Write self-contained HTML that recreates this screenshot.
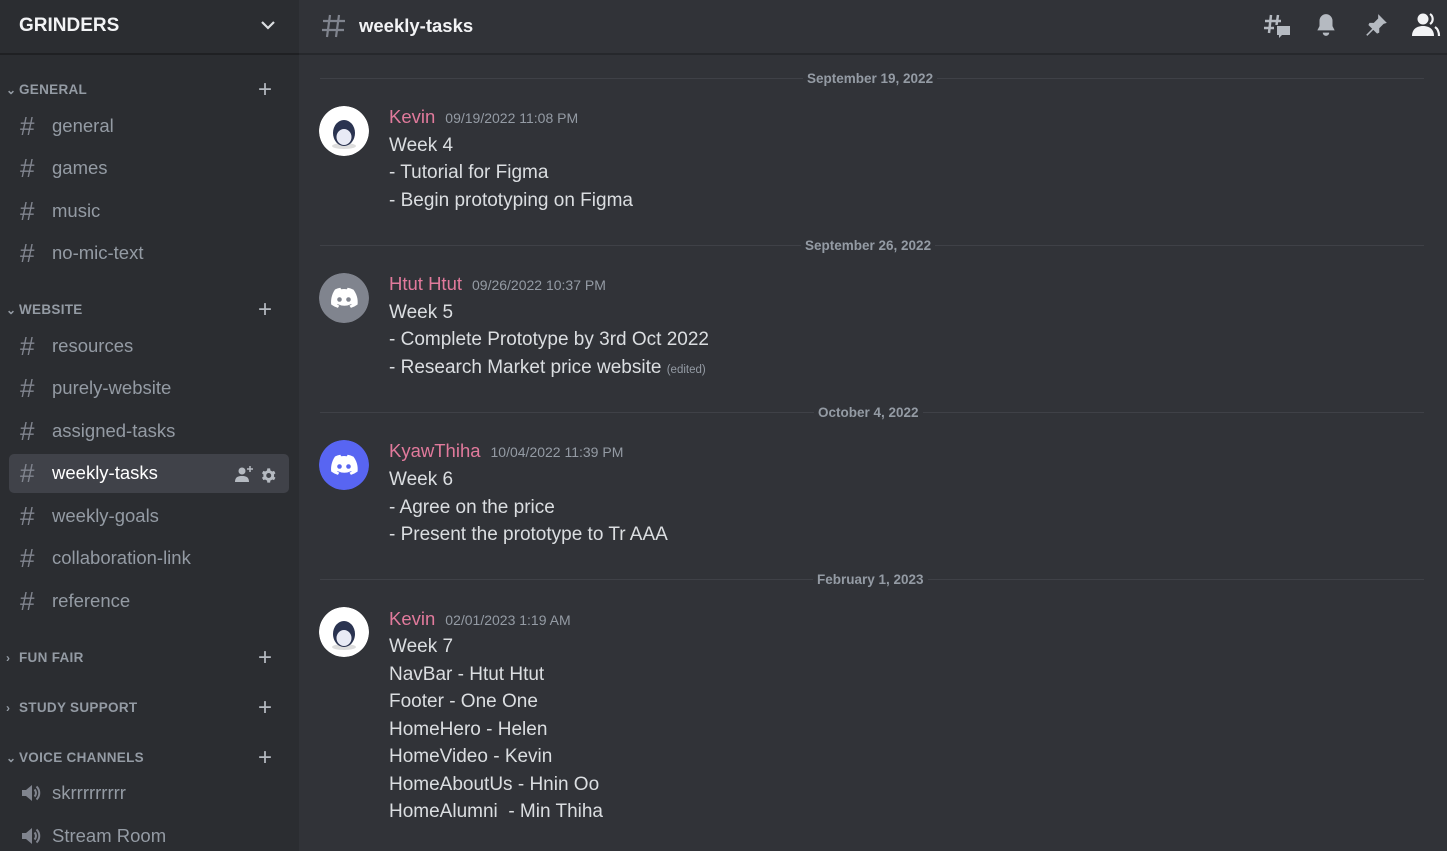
<!DOCTYPE html>
<html><head><meta charset="utf-8"><style>
*{margin:0;padding:0;box-sizing:border-box}
body{width:1447px;height:851px;overflow:hidden;background:#313338;font-family:"Liberation Sans",sans-serif;position:relative}
.a{position:absolute;white-space:nowrap}
#side{position:absolute;left:0;top:0;width:299px;height:851px;background:#2b2d31}
#sh{position:absolute;left:0;top:0;width:299px;height:55px;border-bottom:2px solid #1f2023;background:#2b2d31}
#mh{position:absolute;left:299px;top:0;width:1148px;height:55px;border-bottom:2px solid #26282c}
.ch{position:absolute;left:20px;height:30px;line-height:30px;font-size:18.5px;color:#949ba4}
.ch .h{display:inline-block;width:32px;font-size:26px;color:#80848e;vertical-align:top}
.cat{position:absolute;left:6px;font-size:13.5px;font-weight:bold;color:#949ba4;letter-spacing:.3px;line-height:16px}
.cat i{font-style:normal;font-size:12px;display:inline-block;width:13px}
.plus{position:absolute;left:258px;font-size:24px;color:#b5bac1;line-height:20px}
.sep{position:absolute;left:320px;width:1104px;height:1px;background:#3f4147}
.dt{position:absolute;font-size:13.5px;font-weight:bold;color:#949ba4;background:#313338;padding:0 4px;line-height:16px}
.av{position:absolute;left:319px;width:50px;height:50px;border-radius:50%}
.nm{position:absolute;left:389px;font-size:18.5px;color:#e17a9c;line-height:22px}
.nm span{font-size:14px;color:#949ba4;margin-left:10px}
.ln{position:absolute;left:389px;font-size:19px;color:#dbdee1;line-height:24px;white-space:nowrap;margin-top:2px}
</style></head><body>
<div id="side">
<div id="sh"><div class="a" style="left:19px;top:15px;font-size:19px;font-weight:bold;color:#f2f3f5">GRINDERS</div>
<svg class="a" style="left:259px;top:16px" width="18" height="18" viewBox="0 0 18 18"><path d="M3 6l6 6 6-6" stroke="#dbdee1" stroke-width="2.2" fill="none"/></svg></div>

<div class="cat" style="top:82px"><i>⌄</i>GENERAL</div><div class="plus" style="top:80px">+</div>
<div class="ch" style="top:111px"><span class="h">#</span>general</div>
<div class="ch" style="top:153px"><span class="h">#</span>games</div>
<div class="ch" style="top:196px"><span class="h">#</span>music</div>
<div class="ch" style="top:238px"><span class="h">#</span>no-mic-text</div>

<div class="cat" style="top:302px"><i>⌄</i>WEBSITE</div><div class="plus" style="top:300px">+</div>
<div class="ch" style="top:331px"><span class="h">#</span>resources</div>
<div class="ch" style="top:373px"><span class="h">#</span>purely-website</div>
<div class="ch" style="top:416px"><span class="h">#</span>assigned-tasks</div>
<div class="a" style="left:9px;top:454px;width:280px;height:39px;background:#404249;border-radius:5px"></div>
<div class="ch" style="top:458px;color:#fff"><span class="h">#</span>weekly-tasks</div>
<svg class="a" style="left:234px;top:465px" width="20" height="18" viewBox="0 0 20 18"><circle cx="8" cy="6" r="3.5" fill="#b5bac1"/><path d="M1 17c0-5 3-6 7-6s7 1 7 6z" fill="#b5bac1"/><path d="M16 1v6M13 4h6" stroke="#b5bac1" stroke-width="1.5"/></svg>
<svg class="a" style="left:260px;top:467px" width="17" height="17" viewBox="0 0 24 24"><path fill="#b5bac1" d="M19.7 13.5a7.8 7.8 0 000-3l2.1-1.6-2-3.5-2.5 1a8 8 0 00-2.6-1.5L14.3 2h-4l-.4 2.9a8 8 0 00-2.6 1.5l-2.5-1-2 3.5 2.1 1.6a7.8 7.8 0 000 3l-2.1 1.6 2 3.5 2.5-1a8 8 0 002.6 1.5l.4 2.9h4l.4-2.9a8 8 0 002.6-1.5l2.5 1 2-3.5zM12.3 15.5a3.5 3.5 0 110-7 3.5 3.5 0 010 7z"/></svg>
<div class="ch" style="top:501px"><span class="h">#</span>weekly-goals</div>
<div class="ch" style="top:543px"><span class="h">#</span>collaboration-link</div>
<div class="ch" style="top:586px"><span class="h">#</span>reference</div>

<div class="cat" style="top:650px"><i>›</i>FUN FAIR</div><div class="plus" style="top:648px">+</div>
<div class="cat" style="top:700px"><i>›</i>STUDY SUPPORT</div><div class="plus" style="top:698px">+</div>
<div class="cat" style="top:750px"><i>⌄</i>VOICE CHANNELS</div><div class="plus" style="top:748px">+</div>
<svg class="a" style="left:20px;top:782px" width="22" height="22" viewBox="0 0 22 22"><path d="M2 8h4l6-5v16l-6-5H2z" fill="#80848e"/><path d="M14.5 7.5a5 5 0 010 7M16.5 4.5a9 9 0 010 13" stroke="#80848e" stroke-width="2" fill="none"/></svg>
<div class="ch" style="top:778px;left:52px">skrrrrrrrrr</div>
<svg class="a" style="left:20px;top:825px" width="22" height="22" viewBox="0 0 22 22"><path d="M2 8h4l6-5v16l-6-5H2z" fill="#80848e"/><path d="M14.5 7.5a5 5 0 010 7M16.5 4.5a9 9 0 010 13" stroke="#80848e" stroke-width="2" fill="none"/></svg>
<div class="ch" style="top:821px;left:52px">Stream Room</div>
</div>

<div id="mh">
<svg class="a" style="left:22px;top:13px" width="26" height="26" viewBox="0 0 26 26"><path d="M9 2L6 24M18 2l-3 22M2 8h22M1 17h22" stroke="#80848e" stroke-width="2.2" fill="none"/></svg>
<div class="a" style="left:60px;top:15px;font-size:18.5px;font-weight:bold;color:#f2f3f5">weekly-tasks</div>
<svg class="a" style="left:964px;top:12px" width="28" height="28" viewBox="0 0 28 28"><path d="M8 3l-2 18M15 3l-1.5 10M2 9h16M1 16h10" stroke="#b5bac1" stroke-width="2.5" fill="none"/><path d="M14 14h13v9h-8l-3 3v-3h-2z" fill="#b5bac1"/></svg>
<svg class="a" style="left:1014px;top:12px" width="26" height="26" viewBox="0 0 24 24"><path fill="#b5bac1" d="M12 2a6 6 0 00-6 6v5l-2 4h16l-2-4V8a6 6 0 00-6-6zM9 19a3 3 0 006 0z"/></svg>
<svg class="a" style="left:1064px;top:12px" width="26" height="26" viewBox="0 0 24 24"><path fill="#b5bac1" d="M14 2l8 8-3 1-4 4 0 4-2 1-3.5-3.5L4 22l-1-1 5.5-5.5L5 12l1-2h4l4-4z"/></svg>
<svg class="a" style="left:1112px;top:11px" width="30" height="28" viewBox="0 0 30 28"><circle cx="12" cy="8" r="5.5" fill="#f2f3f5"/><path d="M1 25c0-7 5-10 11-10s11 3 11 10z" fill="#f2f3f5"/><path d="M19 3a6 6 0 010 10M24 16c3 2 4 5 4 9" stroke="#f2f3f5" stroke-width="2.2" fill="none"/></svg>
</div>

<div class="sep" style="top:78px"></div><div class="dt" style="left:803px;top:71px">September 19, 2022</div>
<div class="sep" style="top:245px"></div><div class="dt" style="left:801px;top:238px">September 26, 2022</div>
<div class="sep" style="top:412px"></div><div class="dt" style="left:814px;top:405px">October 4, 2022</div>
<div class="sep" style="top:579px"></div><div class="dt" style="left:813px;top:572px">February 1, 2023</div>

<svg class="av" style="top:106px" viewBox="0 0 50 50"><circle cx="25" cy="25" r="25" fill="#fff"/><ellipse cx="25" cy="40" rx="12" ry="3" fill="#ddd"/><ellipse cx="25" cy="27" rx="11" ry="13" fill="#2a3350"/><ellipse cx="25" cy="31" rx="7.5" ry="8" fill="#e8eaf5"/></svg>
<div class="nm" style="top:106px">Kevin<span>09/19/2022 11:08 PM</span></div>
<div class="ln" style="top:132px">Week 4</div>
<div class="ln" style="top:159px">- Tutorial for Figma</div>
<div class="ln" style="top:187px">- Begin prototyping on Figma</div>

<svg class="av" style="top:273px" viewBox="0 0 50 50"><circle cx="25" cy="25" r="25" fill="#80848e"/><path fill="#fff" d="M34 16.5a22 22 0 00-5.4-1.7l-.7 1.4a20 20 0 00-5.8 0l-.7-1.4a22 22 0 00-5.4 1.7C12.6 21.6 11.7 26.6 12.2 31.500a22 22 0 006.700 3.4l1.400-2.300a14 14 0 01-2.200-1.100l.5-.4a15.700 15.700 0 0013.600 0l.5.4a14 14 0 01-2.200 1.100l1.400 2.300a22 22 0 006.700-3.400c.6-5.700-1-10.700-4.300-15z"/><circle cx="20.500" cy="26.500" r="2.300" fill="#80848e"/><circle cx="29.500" cy="26.500" r="2.300" fill="#80848e"/></svg>
<div class="nm" style="top:273px">Htut Htut<span>09/26/2022 10:37 PM</span></div>
<div class="ln" style="top:299px">Week 5</div>
<div class="ln" style="top:326px">- Complete Prototype by 3rd Oct 2022</div>
<div class="ln" style="top:354px">- Research Market price website <span style="font-size:11.5px;color:#949ba4">(edited)</span></div>

<svg class="av" style="top:440px" viewBox="0 0 50 50"><circle cx="25" cy="25" r="25" fill="#5865f2"/><path fill="#fff" d="M34 16.5a22 22 0 00-5.4-1.7l-.7 1.4a20 20 0 00-5.8 0l-.7-1.4a22 22 0 00-5.4 1.7C12.6 21.6 11.7 26.6 12.2 31.500a22 22 0 006.700 3.4l1.400-2.300a14 14 0 01-2.200-1.100l.5-.4a15.700 15.700 0 0013.600 0l.5.4a14 14 0 01-2.200 1.100l1.400 2.300a22 22 0 006.700-3.400c.6-5.700-1-10.700-4.300-15z"/><circle cx="20.500" cy="26.500" r="2.300" fill="#5865f2"/><circle cx="29.500" cy="26.500" r="2.300" fill="#5865f2"/></svg>
<div class="nm" style="top:440px">KyawThiha<span>10/04/2022 11:39 PM</span></div>
<div class="ln" style="top:466px">Week 6</div>
<div class="ln" style="top:494px">- Agree on the price</div>
<div class="ln" style="top:521px">- Present the prototype to Tr AAA</div>

<svg class="av" style="top:607px" viewBox="0 0 50 50"><circle cx="25" cy="25" r="25" fill="#fff"/><ellipse cx="25" cy="40" rx="12" ry="3" fill="#ddd"/><ellipse cx="25" cy="27" rx="11" ry="13" fill="#2a3350"/><ellipse cx="25" cy="31" rx="7.5" ry="8" fill="#e8eaf5"/></svg>
<div class="nm" style="top:608px">Kevin<span>02/01/2023 1:19 AM</span></div>
<div class="ln" style="top:633px">Week 7</div>
<div class="ln" style="top:661px">NavBar - Htut Htut</div>
<div class="ln" style="top:688px">Footer - One One</div>
<div class="ln" style="top:716px">HomeHero - Helen</div>
<div class="ln" style="top:743px">HomeVideo - Kevin</div>
<div class="ln" style="top:771px">HomeAboutUs - Hnin Oo</div>
<div class="ln" style="top:798px">HomeAlumni&nbsp; - Min Thiha</div>
</body></html>
